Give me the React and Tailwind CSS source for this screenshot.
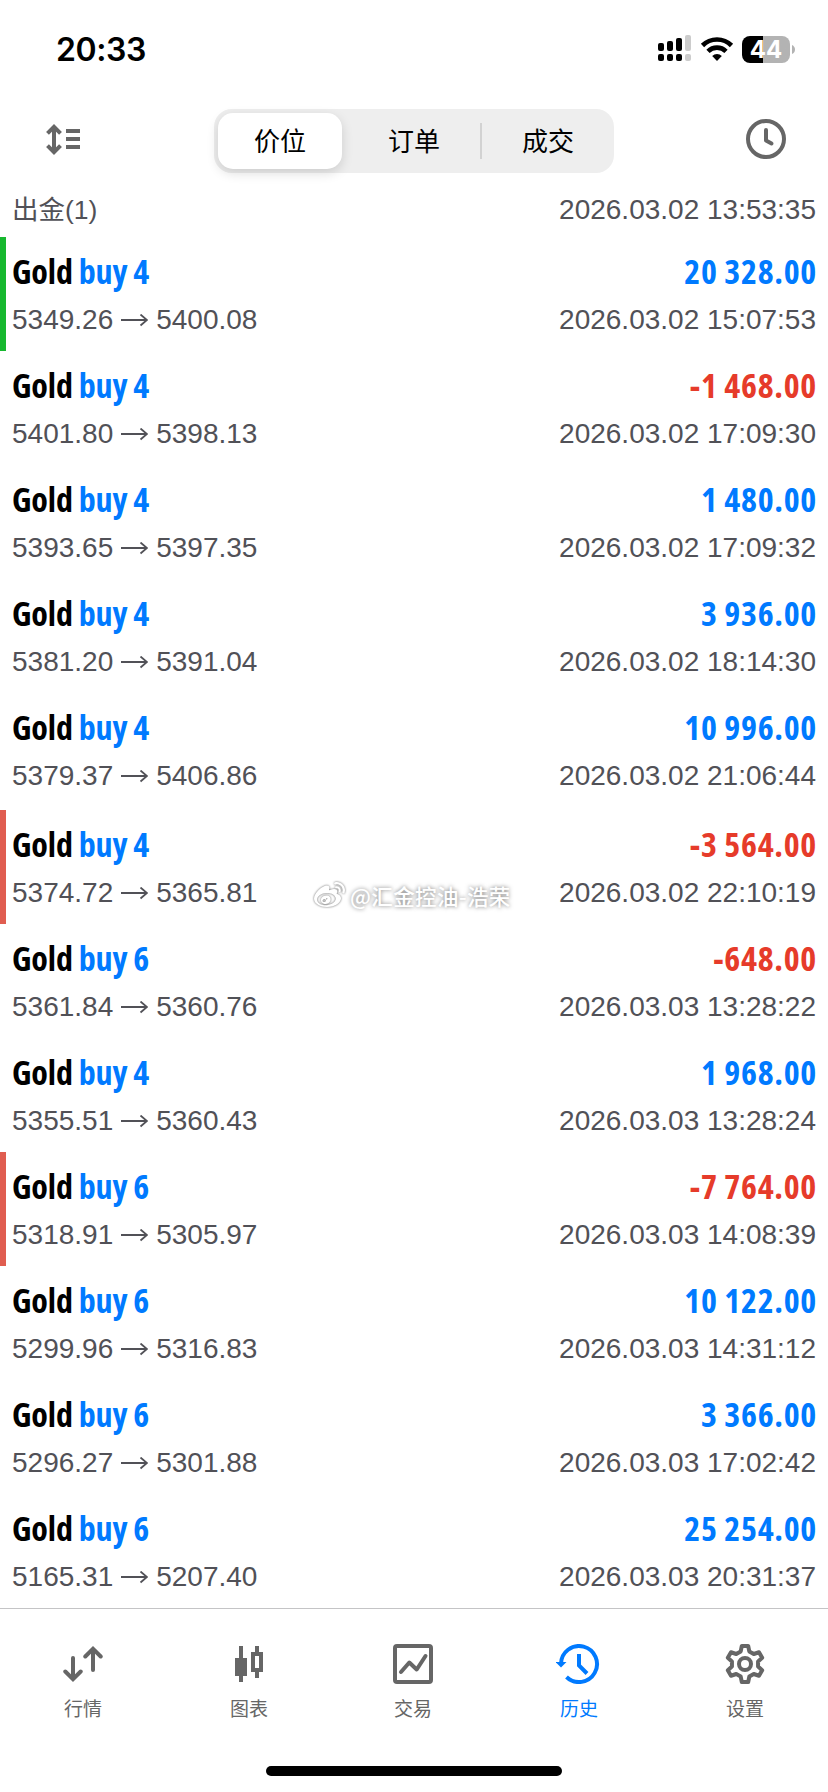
import { FaWeibo } from "react-icons/fa";

const deals = [
  { symbol: "Gold", side: "buy 4", from: "5349.26", to: "5400.08", profit: "20 328.00", time: "2026.03.02 15:07:53", mark: "tp" },
  { symbol: "Gold", side: "buy 4", from: "5401.80", to: "5398.13", profit: "-1 468.00", time: "2026.03.02 17:09:30" },
  { symbol: "Gold", side: "buy 4", from: "5393.65", to: "5397.35", profit: "1 480.00", time: "2026.03.02 17:09:32" },
  { symbol: "Gold", side: "buy 4", from: "5381.20", to: "5391.04", profit: "3 936.00", time: "2026.03.02 18:14:30" },
  { symbol: "Gold", side: "buy 4", from: "5379.37", to: "5406.86", profit: "10 996.00", time: "2026.03.02 21:06:44", gap: true },
  { symbol: "Gold", side: "buy 4", from: "5374.72", to: "5365.81", profit: "-3 564.00", time: "2026.03.02 22:10:19", mark: "sl" },
  { symbol: "Gold", side: "buy 6", from: "5361.84", to: "5360.76", profit: "-648.00", time: "2026.03.03 13:28:22" },
  { symbol: "Gold", side: "buy 4", from: "5355.51", to: "5360.43", profit: "1 968.00", time: "2026.03.03 13:28:24" },
  { symbol: "Gold", side: "buy 6", from: "5318.91", to: "5305.97", profit: "-7 764.00", time: "2026.03.03 14:08:39", mark: "sl" },
  { symbol: "Gold", side: "buy 6", from: "5299.96", to: "5316.83", profit: "10 122.00", time: "2026.03.03 14:31:12" },
  { symbol: "Gold", side: "buy 6", from: "5296.27", to: "5301.88", profit: "3 366.00", time: "2026.03.03 17:02:42" },
  { symbol: "Gold", side: "buy 6", from: "5165.31", to: "5207.40", profit: "25 254.00", time: "2026.03.03 20:31:37" },
];

function StatusBar() {
  return (
    <div className="flex h-[99px] justify-between pt-[31px] pr-[33px] pl-[56px]">
      <span className="font-['Inter',sans-serif] text-[32px] leading-[38px] font-semibold tracking-[-0.4px] text-black">
        20:33
      </span>
      <div className="flex items-start">
        <svg className="mt-[4px] h-[27px] w-[34px]" viewBox="0 0 34 27">
          <rect x="0" y="8" width="6" height="8" rx="2" />
          <rect x="9" y="6" width="6" height="10" rx="2" />
          <rect x="18" y="3" width="6" height="13" rx="2" />
          <rect x="27" y="0" width="6" height="16" rx="2" fill="#ccc" />
          <rect x="0" y="19" width="6" height="7" rx="2" />
          <rect x="9" y="19" width="6" height="7" rx="2" />
          <rect x="18" y="19" width="6" height="7" rx="2" />
          <rect x="27" y="19" width="6" height="7" rx="2" fill="#ccc" />
        </svg>
        <svg className="mt-[6px] ml-[8px] h-[24px] w-[34px]" viewBox="0 0 34 24">
          <path d="M2.5 8.5a20.5 20.5 0 0 1 29 0" fill="none" stroke="#000" strokeWidth="4.6" />
          <path d="M8 14.3a12.8 12.8 0 0 1 18 0" fill="none" stroke="#000" strokeWidth="4.6" />
          <path d="M12.2 19a6.8 6.8 0 0 1 9.6 0L17 24z" />
        </svg>
        <div className="mt-[5px] ml-[8px] flex h-[27px] w-[48px] items-center justify-center rounded-[8px] bg-linear-to-r from-black from-44% to-[#b3b3b3] to-44%">
          <span className="font-['Inter',sans-serif] text-[24px] leading-none font-bold text-white">
            44
          </span>
        </div>
        <svg className="mt-[14px] ml-[2px] h-[9px] w-[3px]" viewBox="0 0 3 9">
          <path d="M0 0q3 1.5 3 4.5t-3 4.5z" fill="#b3b3b3" />
        </svg>
      </div>
    </div>
  );
}

function Toolbar() {
  return (
    <div className="flex h-[92px] justify-between pt-[10px] pr-[42px] pl-[46px]">
      <svg className="mt-[14px] h-[33px] w-[34px]" viewBox="0 0 34 33" fill="none" stroke="#666">
        <path d="M8 4v25M1.500 10.300 8 3.800l6.500 6.500M1.500 22.700 8 29.200l6.500-6.500" strokeWidth="4" />
        <path d="M20 8h14M20 16h14M20 24h14" strokeWidth="4" />
      </svg>
      <div className="ml-[2px] flex h-[64px] w-[400px] items-center rounded-[18px] bg-[#eee] p-[4px] font-['Noto_Sans_CJK_SC',sans-serif] text-[26px] leading-[40px] text-black">
        <span className="h-[56px] w-[124px] rounded-[15px] bg-white pt-[7px] text-center shadow-[0_4px_12px_rgba(0,0,0,0.14)]">
          价位
        </span>
        <span className="flex-1 pb-[2px] pl-[6px] text-center">订单</span>
        <span className="h-[36px] w-[2px] bg-[#d2d2d2]" />
        <span className="w-[128px] pb-[2px] pl-[4px] text-center">成交</span>
      </div>
      <svg className="mt-[10px] h-[40px] w-[40px]" viewBox="0 0 40 40" fill="none" stroke="#666" strokeWidth="4">
        <circle cx="20" cy="20" r="18" />
        <path d="M20 11v10.500l5.500 3" strokeLinecap="round" strokeLinejoin="round" />
      </svg>
    </div>
  );
}

function Arrow() {
  return (
    <svg className="mx-[8px] h-[13px] w-[27px]" viewBox="0 0 27 13" fill="none" stroke="#515157" strokeWidth="1.8">
      <path d="M0 6h26M19.500 .5l6.500 5.500-6.500 5.500" />
    </svg>
  );
}

function DealRow({ deal }) {
  const isLoss = deal.profit.startsWith("-");
  const markColor =
    deal.mark === "tp"
      ? "border-[#17b82f]"
      : deal.mark === "sl"
        ? "border-[#e05d50]"
        : "border-transparent";

  return (
    <div
      className={`flex h-[114px] flex-col border-l-[6px] pt-[11px] pr-[12px] pl-[6px] ${markColor} ${
        deal.gap ? "mb-[3px]" : ""
      }`}
    >
      <div className="flex h-[47px] items-center justify-between font-['Open_Sans',sans-serif] text-[34px] leading-[47px] font-bold [font-stretch:75%]">
        <p className="tracking-[-0.15px] text-black">
          {deal.symbol} <span className="text-[#007aff]">{deal.side}</span>
        </p>
        <p
          className={`-mr-px tracking-[0.7px] ${
            isLoss ? "text-[#e63b2a]" : "text-[#007aff]"
          }`}
        >
          {deal.profit}
        </p>
      </div>
      <div className="mt-[2px] flex h-[46px] items-center justify-between font-['Liberation_Sans',sans-serif] text-[28px] leading-[46px] text-[#515157]">
        <span className="flex items-center">
          {deal.from}
          <Arrow />
          {deal.to}
        </span>
        <span>{deal.time}</span>
      </div>
    </div>
  );
}

function QuotesIcon() {
  return (
    <svg className="h-[40px] w-[40px]" viewBox="0 0 40 40" fill="none" stroke="currentColor" strokeWidth="4" strokeLinecap="round">
      <path d="M10 14v21M2.300 27.500l7.700 7.700 7.700-7.700M30 26V5M22.300 12.500l7.700-7.700 7.700 7.700" />
    </svg>
  );
}

function ChartIcon() {
  return (
    <svg className="h-[40px] w-[40px]" viewBox="0 0 40 40" fill="none" stroke="currentColor" strokeWidth="4">
      <path d="M12 2v36M28 2v7M28 27v7" />
      <path d="M6 14h12v18H6z" fill="currentColor" stroke="none" />
      <path d="M24 10h8v16h-8z" />
    </svg>
  );
}

function TradeIcon() {
  return (
    <svg className="h-[40px] w-[40px]" viewBox="0 0 40 40" fill="none" stroke="currentColor" strokeWidth="4">
      <rect x="2" y="2" width="36" height="36" rx="2" />
      <path d="M8 28l8.300-9.500 7.400 7L32.500 12" strokeLinecap="round" strokeLinejoin="round" />
    </svg>
  );
}

function HistoryIcon() {
  return (
    <svg className="h-[40px] w-[46px]" viewBox="0 0 46 40" fill="none" stroke="currentColor" strokeWidth="4">
      <path d="M5 20a18 18 0 1 1 5.500 13" />
      <path d="M-.5 18h11L5 23.500z" fill="currentColor" stroke="none" />
      <path d="M23 10v11.500l8 8" />
    </svg>
  );
}

function SettingsIcon() {
  return (
    <svg className="h-[40px] w-[40px]" viewBox="0 0 40 40" fill="none" stroke="currentColor" strokeWidth="4">
      <path
        d="M16.800 2h6.400l1.100 5.400 4.460 2.580 5.230-1.750 3.200 5.540-4.130 3.650v5.160l4.130 3.650-3.200 5.540-5.230-1.750-4.460 2.580L23.200 38h-6.400l-1.100-5.400-4.460-2.580-5.230 1.750-3.200-5.540 4.130-3.650v-5.160l-4.130-3.650 3.200-5.540 5.230 1.750 4.460-2.580z"
        strokeLinejoin="round"
      />
      <circle cx="20" cy="20" r="6" />
    </svg>
  );
}

const tabs = [
  { label: "行情", Icon: QuotesIcon },
  { label: "图表", Icon: ChartIcon },
  { label: "交易", Icon: TradeIcon },
  { label: "历史", Icon: HistoryIcon, active: true },
  { label: "设置", Icon: SettingsIcon },
];

function TabBar() {
  return (
    <nav className="grid h-[158px] grid-cols-[166px_166px_162px_170px_162px] border-t border-[#c4c4c6] pt-[35px]">
      {tabs.map(({ label, Icon, active }) => (
        <div
          key={label}
          className={`flex flex-col items-center ${active ? "text-[#007aff]" : "text-[#666]"}`}
        >
          <Icon />
          <span className="mt-[10px] font-['Noto_Sans_CJK_SC',sans-serif] text-[19px] leading-[28px]">
            {label}
          </span>
        </div>
      ))}
    </nav>
  );
}

export default function App() {
  return (
    <div className="relative flex h-[1792px] w-[828px] flex-col overflow-hidden bg-white">
      <StatusBar />
      <Toolbar />
      <div className="flex h-[46px] items-start justify-between px-[12px] pt-px font-['Liberation_Sans','Noto_Sans_CJK_SC',sans-serif] text-[28px] leading-[36px] text-[#515157]">
        <span className="text-[26.5px]">出金(1)</span>
        <span>2026.03.02 13:53:35</span>
      </div>
      <div className="flex flex-col">
        {deals.map((deal) => (
          <DealRow key={deal.time} deal={deal} />
        ))}
      </div>
      <TabBar />
      <div className="ml-[266px] h-[10px] w-[296px] rounded-full bg-black" />
      <div className="absolute top-[880px] left-[314px] flex items-center font-['Noto_Sans_CJK_SC',sans-serif] text-[21.5px] leading-[30px] font-medium tracking-[0.4px] whitespace-nowrap text-white [text-shadow:0_0_4px_rgba(0,0,0,0.55)]">
        <FaWeibo className="mr-[5px] h-[31px] w-[31px] drop-shadow-[0_0_1px_rgba(0,0,0,0.6)]" />
        @汇金控油-浩荣
      </div>
    </div>
  );
}
